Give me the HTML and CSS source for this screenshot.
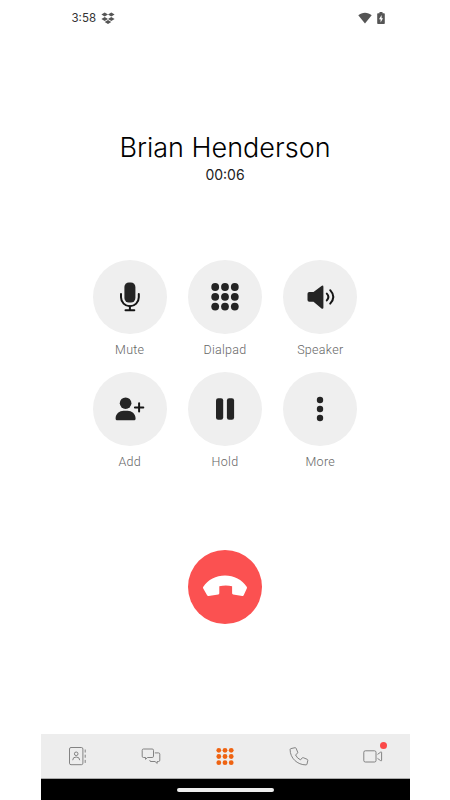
FILE: index.html
```
<!DOCTYPE html>
<html lang="en">
<head>
    <meta charset="UTF-8">
    <meta name="viewport" content="width=device-width, initial-scale=1.0">
    <title>Call</title>
    <link rel="stylesheet" href="styles.css">
</head>
<body>
    <div class="phone">
        <div class="status-bar">
            <span class="clock">3:58</span>
            <svg class="dropbox" width="14" height="13" viewBox="0 0 14 13">
                <path d="M3.7 0.5L7 2.5L3.7 4.5L0.4 2.5zM10.3 0.5L13.6 2.5L10.3 4.5L7 2.5zM3.7 4.9L7 6.9L3.7 8.9L0.4 6.9zM10.3 4.9L13.6 6.9L10.3 8.9L7 6.9zM7 8L10.3 10L7 12L3.7 10z"/>
            </svg>
            <svg class="wifi" width="14" height="12" viewBox="0 0 14 12">
                <path d="M0.3 3.2C4 -0.2 10 -0.2 13.7 3.2L7 11.5z"/>
            </svg>
            <svg class="battery" width="8" height="12" viewBox="0 0 8 12">
                <path fill-rule="evenodd" d="M2.5 0h3v1.2H7a0.8 0.8 0 0 1 0.8 0.8v9.2a0.8 0.8 0 0 1-0.8 0.8H1a0.8 0.8 0 0 1-0.8-0.8V2A0.8 0.8 0 0 1 1 1.2h1.5zM4.6 3L2 7.2h1.6V10.4L6 6.2H4.6z"/>
            </svg>
        </div>

        <div class="caller">
            <h1>Brian Henderson</h1>
            <div class="timer">00:06</div>
        </div>

        <div class="controls">
            <div class="control">
                <button class="round">
                    <svg viewBox="0 0 74 74">
                        <rect x="31.4" y="22.5" width="11" height="20" rx="4.5"/>
                        <path class="line" d="M28 34v3.3a8.9 8.9 0 0 0 17.8 0V34M36.9 46v4.3M32.5 50.3h8.8"/>
                    </svg>
                </button>
                <span>Mute</span>
            </div>
            <div class="control">
                <button class="round">
                    <svg viewBox="0 0 74 74">
                        <circle cx="27.2" cy="27" r="3.9"/><circle cx="37" cy="27" r="3.9"/><circle cx="46.8" cy="27" r="3.9"/>
                        <circle cx="27.2" cy="36.8" r="3.9"/><circle cx="37" cy="36.8" r="3.9"/><circle cx="46.8" cy="36.8" r="3.9"/>
                        <circle cx="27.2" cy="46.6" r="3.9"/><circle cx="37" cy="46.6" r="3.9"/><circle cx="46.8" cy="46.6" r="3.9"/>
                    </svg>
                </button>
                <span>Dialpad</span>
            </div>
            <div class="control">
                <button class="round">
                    <svg viewBox="0 0 74 74">
                        <path d="M26.3 31.9h4.2l8-6q1.9-1 1.9 1v20.5q0 2-1.9 1l-8-6.6h-4.2q-1.8 0-1.8-1.8v-6.3q0-1.8 1.8-1.8z"/>
                        <path class="line" d="M43.8 33.6q3.2 3.2 0 6.800M47.2 30.2q6.200 6.800 0 13.400"/>
                    </svg>
                </button>
                <span>Speaker</span>
            </div>
            <div class="control">
                <button class="round">
                    <svg viewBox="0 0 74 74">
                        <circle cx="32.6" cy="31.2" r="5.8"/>
                        <path d="M22.600 46.500c0-5 4-7.800 8-7.800h4c4 0 8 2.800 8 7.800q0 1.800-1 1.800h-18q-1 0-1-1.800z"/>
                        <path class="line" d="M46.100 31.200v8.400M41.900 35.400h8.400"/>
                    </svg>
                </button>
                <span>Add</span>
            </div>
            <div class="control">
                <button class="round">
                    <svg viewBox="0 0 74 74">
                        <rect x="28" y="26.200" width="7.200" height="21.600" rx="2.200"/>
                        <rect x="38.900" y="26.200" width="7.200" height="21.600" rx="2.200"/>
                    </svg>
                </button>
                <span>Hold</span>
            </div>
            <div class="control">
                <button class="round">
                    <svg viewBox="0 0 74 74">
                        <circle cx="37" cy="28" r="3.200"/>
                        <circle cx="37" cy="37" r="3.200"/>
                        <circle cx="37" cy="46" r="3.200"/>
                    </svg>
                </button>
                <span>More</span>
            </div>
        </div>

        <button class="round hangup">
            <svg viewBox="0 0 74 74">
                <path d="M15.300 36.800C20 29.500 28 25.400 37 25.400s17 4.100 21.700 11.400q0.500 0.800 0.200 1.500l-3.200 7q-0.400 0.900-1.400 0.700l-9.200-1.500q-1-0.200-1-1.200v-7.100q-6.100-1.300-12.800 0v7.100q0 1-1 1.200l-9.700 1.500q-1 0.200-1.500-0.700l-4-7q-0.300-0.700 0.200-1.500z"/>
            </svg>
        </button>

        <div class="nav">
            <a class="tab">
                <svg width="20" height="20" viewBox="0 0 20 20">
                    <rect x="2.500" y="1.500" width="13.400" height="17.200" rx="1.500"/>
                    <circle cx="9.200" cy="7.800" r="1.800"/>
                    <path d="M5.700 14.200q0-3.200 3.500-3.200t3.500 3.200M18.200 3.500v3M18.200 8.700v3M18.200 13.900v3"/>
                </svg>
            </a>
            <a class="tab">
                <svg width="20" height="20" viewBox="0 0 20 20">
                    <path d="M2.500 3h8.700q1.300 0 1.300 1.300v5.900q0 1.300-1.300 1.300H6.500l-2 1.800v-1.800h-2q-1.300 0-1.300-1.300V4.300Q1.200 3 2.500 3z"/>
                    <path d="M13.800 6.900h3.700q1.300 0 1.300 1.300v6q0 1.300-1.300 1.300h-1.300v1.900l-2.200-1.900h-4q-1.300 0-1.300-1.300"/>
                </svg>
            </a>
            <a class="tab active">
                <svg width="20" height="20" viewBox="0 0 20 20">
                    <circle cx="3.800" cy="4.300" r="2.400"/><circle cx="10" cy="4.300" r="2.400"/><circle cx="16.200" cy="4.300" r="2.400"/>
                    <circle cx="3.800" cy="10.500" r="2.400"/><circle cx="10" cy="10.500" r="2.400"/><circle cx="16.200" cy="10.500" r="2.400"/>
                    <circle cx="3.800" cy="16.700" r="2.400"/><circle cx="10" cy="16.700" r="2.400"/><circle cx="16.200" cy="16.700" r="2.400"/>
                </svg>
            </a>
            <a class="tab">
                <svg width="20" height="20" viewBox="0 0 20 20">
                    <path d="M1.900 2.600L6 1.700q0.800-0.100 1.100 0.600l1.600 3.900q0.200 0.700-0.300 1.200L6.500 8.900q1.600 3.400 5 5l1.600-1.900q0.500-0.600 1.200-0.300l3.900 1.600q0.700 0.400 0.600 1.100l-0.800 3.700q-0.200 0.800-1 0.800C8.300 18.900 1.100 12.100 1.100 3.600q0-0.800 0.800-1z"/>
                </svg>
            </a>
            <a class="tab">
                <svg width="20" height="20" viewBox="0 0 20 20">
                    <rect x="0.800" y="4.800" width="12.200" height="11.200" rx="1.500"/>
                    <path d="M14.500 8.400l3.200-2.300q0.900-0.500 0.900 0.400v7.800q0 0.900-0.900 0.400L14.500 12.400"/>
                </svg>
                <i class="badge"></i>
            </a>
        </div>
        <div class="gesture-bar"><div class="pill"></div></div>
    </div>
</body>
</html>
```

FILE: styles.css
```
* {
    box-sizing: border-box;
}
body {
    margin: 0;
    background-color: #fff;
    font-family: Roboto, sans-serif;
}
.phone {
    display: flex;
    flex-direction: column;
    align-items: center;
    width: 369px;
    height: 800px;
    margin: 0 auto;
    overflow: hidden;
}
.status-bar {
    display: flex;
    align-items: center;
    width: 100%;
    height: 36px;
    padding: 0 25px 0 31px;
    color: #333;
    fill: #555;
}
.clock {
    width: 26px;
    font-family: Inter, sans-serif;
    font-size: 11.5px;
    white-space: nowrap;
}
.dropbox {
    margin-left: 3px;
}
.wifi {
    margin-left: auto;
    margin-right: 5px;
}
.caller {
    padding-top: 95px;
    text-align: center;
    color: #000;
    font-family: Inter, sans-serif;
}
h1 {
    margin: 0;
    font-size: 27px;
    font-weight: 300;
    line-height: 34px;
}
.timer {
    color: #222;
    font-size: 14px;
    line-height: 19px;
}
.controls {
    display: grid;
    grid-template-columns: repeat(3, 74px);
    column-gap: 21.3px;
    row-gap: 12.4px;
    padding-top: 75.7px;
}
.control {
    display: flex;
    flex-direction: column;
    align-items: center;
    height: 100px;
}
.control span {
    margin-top: 7px;
    color: #666;
    font-size: 12.5px;
    font-weight: 300;
    line-height: 18px;
    letter-spacing: 0.3px;
}
.round {
    flex: none;
    width: 74px;
    height: 74px;
    padding: 0;
    border: none;
    border-radius: 50%;
    background-color: #efefef;
    fill: #242424;
}
.round svg {
    display: block;
    width: 74px;
    height: 74px;
}
.line {
    fill: none;
    stroke: #151515;
    stroke-width: 2;
    stroke-linecap: round;
}
.hangup {
    margin-top: 78.4px;
    background-color: #fb5151;
    fill: #fff;
}
.nav {
    display: flex;
    width: 100%;
    height: 45px;
    margin-top: auto;
    background-color: #ededed;
    border-bottom: 1px solid #aaa;
}
.tab {
    position: relative;
    display: flex;
    flex: 1;
    align-items: center;
    justify-content: center;
    fill: none;
    stroke: #777;
    stroke-width: 0.9;
}
.active {
    fill: #ef6311;
    stroke: none;
}
.badge {
    position: absolute;
    top: 8px;
    left: 44px;
    width: 7px;
    height: 7px;
    border-radius: 50%;
    background-color: #fb4949;
}
.gesture-bar {
    display: flex;
    align-items: center;
    justify-content: center;
    width: 100%;
    height: 21px;
    background-color: #000;
}
.pill {
    width: 97px;
    height: 4px;
    border-radius: 2px;
    background-color: #eee;
}
```
